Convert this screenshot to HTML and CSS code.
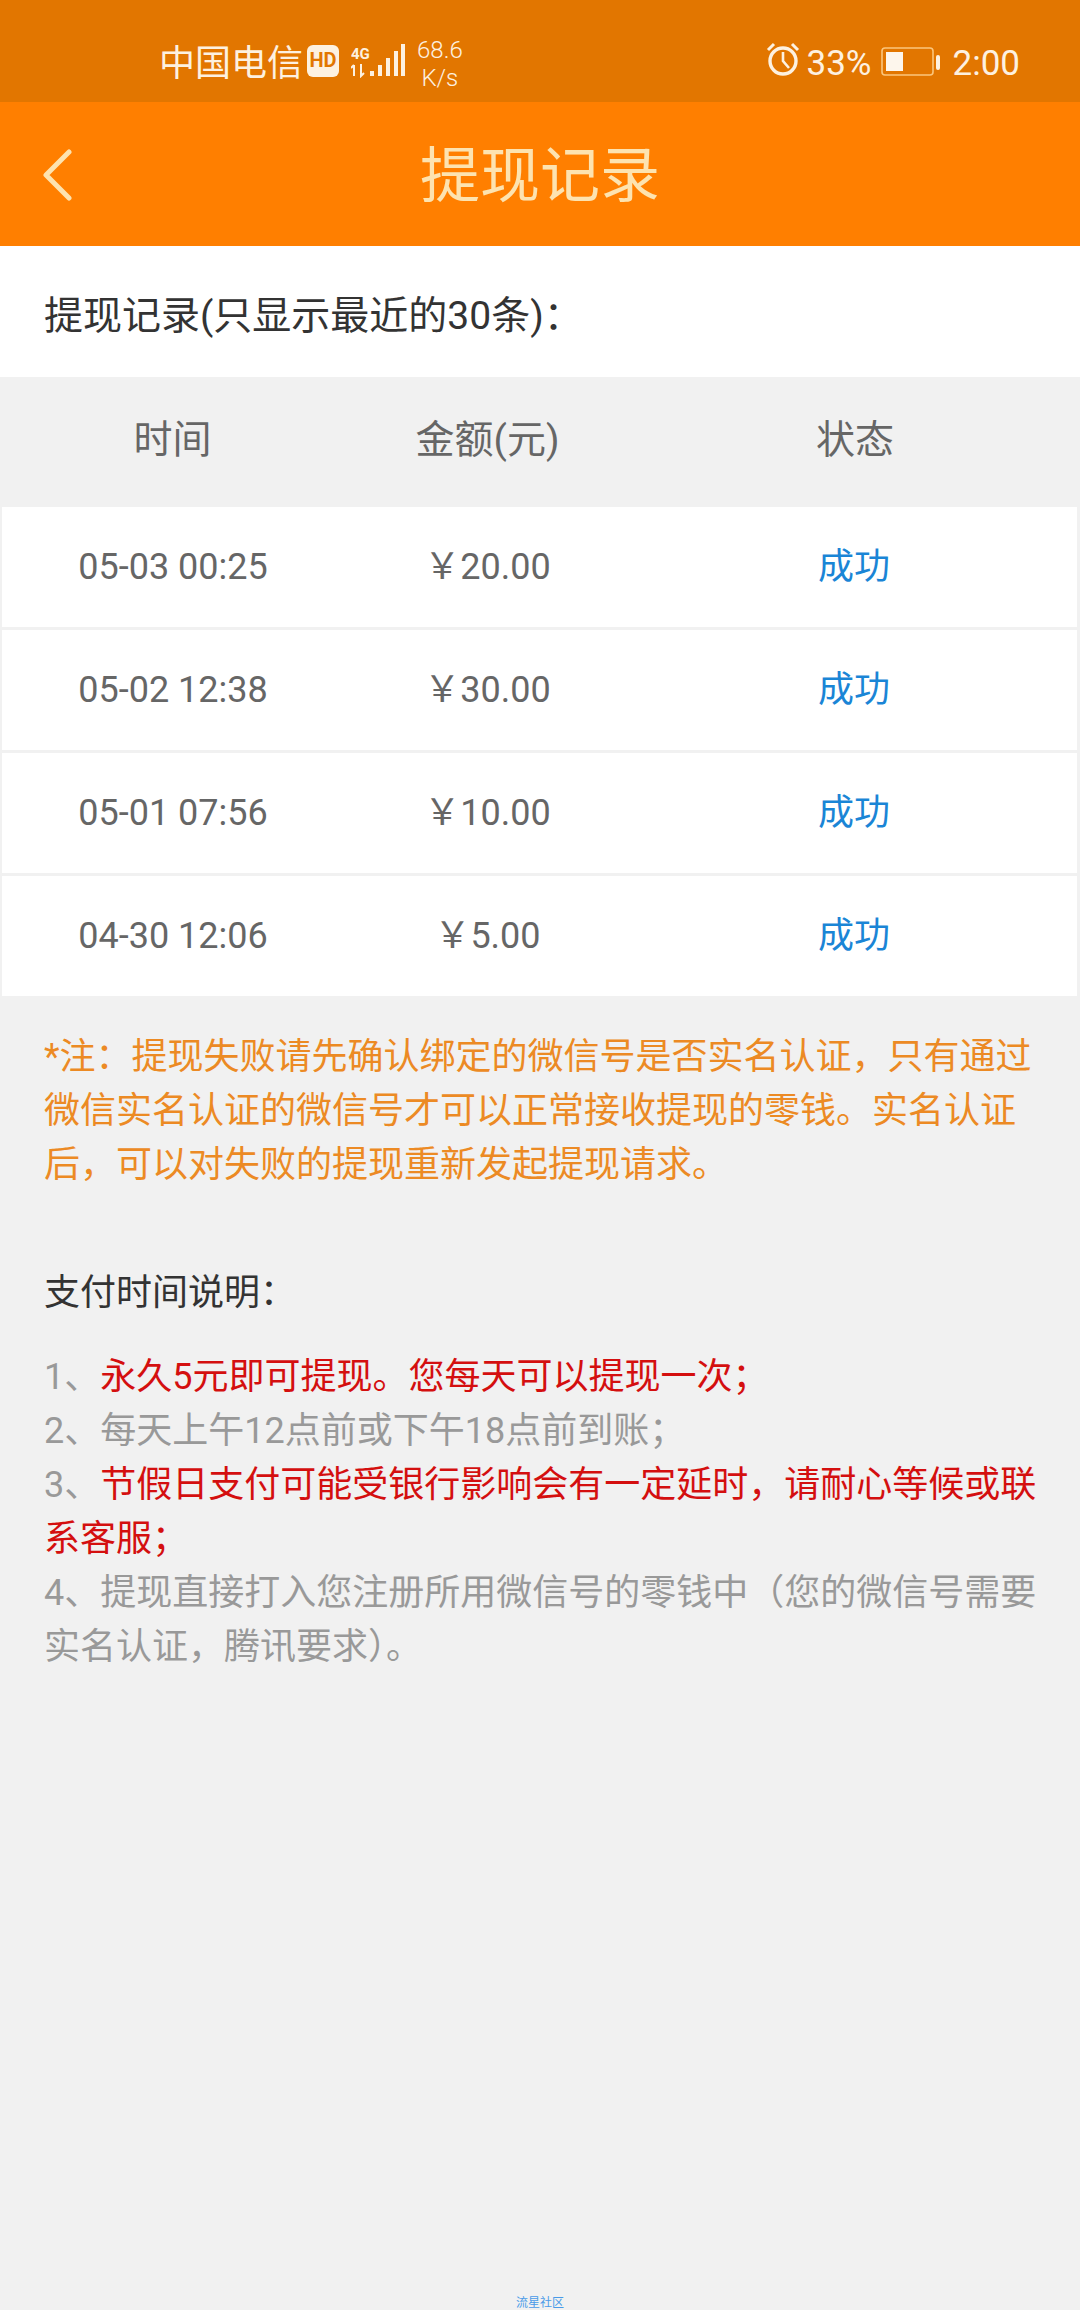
FILE: index.html
```html
<!DOCTYPE html>
<html lang="zh-CN">
<head>
    <meta charset="UTF-8">
    <meta name="viewport" content="width=device-width, initial-scale=1.0">
    <title>提现记录</title>
    <link rel="stylesheet" href="styles.css">
</head>
<body>
    <div class="status-bar">
        <div class="status-left">
            <span class="carrier">中国电信</span>
            <svg class="hd-icon" width="32" height="32" viewBox="0 0 32 32">
                <rect x="0" y="0" width="32" height="32" rx="6" fill="#fdf1e0"/>
                <text x="16" y="22" text-anchor="middle" class="hd-text">HD</text>
            </svg>
            <svg class="signal-icon" width="54" height="34" viewBox="0 0 54 34">
                <text x="0" y="15" class="net-text">4G</text>
                <path d="M3 32V21M0 24l3-3M10 20v12l3-3" stroke="#fdf1e0" stroke-width="2" fill="none"/>
                <rect x="19" y="27" width="4" height="5" fill="#fdf1e0"/>
                <rect x="27" y="21" width="4" height="11" fill="#fdf1e0"/>
                <rect x="35" y="14" width="4" height="18" fill="#fdf1e0"/>
                <rect x="43" y="7" width="4" height="25" fill="#fdf1e0"/>
                <rect x="50" y="0" width="4" height="32" fill="#fdf1e0"/>
            </svg>
            <div class="speed">68.6<br>K/s</div>
        </div>
        <div class="status-right">
            <svg class="alarm-icon" width="34" height="36" viewBox="0 0 34 36">
                <circle cx="17" cy="20" r="13" fill="none" stroke="#fdf1e0" stroke-width="3.4"/>
                <path d="M17 11v9l6 7" fill="none" stroke="#fdf1e0" stroke-width="2.6"/>
                <path d="M2 9l6-6M32 9l-6-6" stroke="#fdf1e0" stroke-width="3"/>
            </svg>
            <span class="battery-pct">33%</span>
            <svg class="battery-icon" width="60" height="30" viewBox="0 0 60 30">
                <rect x="1" y="1" width="51" height="27" rx="3" fill="none" stroke="#fbc67c" stroke-width="1.6"/>
                <rect x="5" y="5" width="17" height="19" fill="#fdf6ec"/>
                <rect x="55" y="8" width="4" height="15" rx="2" fill="#fdf1e0"/>
            </svg>
            <span class="clock">2:00</span>
        </div>
    </div>

    <div class="nav-bar">
        <svg class="back-icon" width="32" height="52" viewBox="0 0 32 52">
            <path d="M28 3L5 26l23 23" fill="none" stroke="#fde3b0" stroke-width="5" stroke-linecap="round" stroke-linejoin="round"/>
        </svg>
        <h1>提现记录</h1>
    </div>

    <div class="section-title">提现记录(只显示最近的30条)：</div>

    <div class="table-head">
        <div class="col-time">时间</div>
        <div class="col-money">金额(元)</div>
        <div class="col-state">状态</div>
    </div>
    <div class="table-body">
        <div class="row">
            <div class="col-time">05-03 00:25</div>
            <div class="col-money">￥20.00</div>
            <div class="col-state ok">成功</div>
        </div>
        <div class="row">
            <div class="col-time">05-02 12:38</div>
            <div class="col-money">￥30.00</div>
            <div class="col-state ok">成功</div>
        </div>
        <div class="row">
            <div class="col-time">05-01 07:56</div>
            <div class="col-money">￥10.00</div>
            <div class="col-state ok">成功</div>
        </div>
        <div class="row">
            <div class="col-time">04-30 12:06</div>
            <div class="col-money">￥5.00</div>
            <div class="col-state ok">成功</div>
        </div>
    </div>

    <p class="note">*注：提现失败请先确认绑定的微信号是否实名认证，只有通过微信实名认证的微信号才可以正常接收提现的零钱。实名认证后，可以对失败的提现重新发起提现请求。</p>

    <div class="pay-title">支付时间说明：</div>
    <ul class="pay-list">
        <li>1、<span class="red">永久5元即可提现。您每天可以提现一次；</span></li>
        <li>2、每天上午12点前或下午18点前到账；</li>
        <li>3、<span class="red">节假日支付可能受银行影响会有一定延时，请耐心等候或联系客服；</span></li>
        <li>4、提现直接打入您注册所用微信号的零钱中（您的微信号需要实名认证，腾讯要求）。</li>
    </ul>

    <div class="watermark">流星社区</div>
</body>
</html>
```

FILE: styles.css
```css
* {
    box-sizing: border-box;
}
html, body {
    margin: 0;
    padding: 0;
}
body {
    position: relative;
    width: 1080px;
    height: 2310px;
    overflow: hidden;
    background-color: #f1f1f1;
    font-family: "Roboto", "Noto Sans CJK SC", sans-serif;
    color: #333;
}
.status-bar {
    height: 102px;
    background-color: #e27600;
    color: #fdf1e0;
    display: flex;
    justify-content: space-between;
    align-items: center;
    padding: 26px 60px 0 159px;
}
.status-left, .status-right {
    display: flex;
    align-items: center;
    line-height: 40px;
}
.carrier {
    font-size: 36px;
}
.hd-icon {
    margin-left: 4px;
    margin-top: -6px;
}
.hd-text {
    font: bold 20px "Roboto", sans-serif;
    fill: #e27600;
}
.net-text {
    font: bold 15px "Roboto", sans-serif;
    fill: #fdf1e0;
}
.signal-icon {
    margin-left: 12px;
    margin-top: -6px;
}
.speed {
    margin-left: 12px;
    font-size: 24px;
    line-height: 28px;
    text-align: center;
    font-weight: 300;
}
.alarm-icon {
    margin-top: -10px;
}
.battery-pct {
    font-size: 35px;
    margin-left: 7px;
}
.battery-icon {
    margin-left: 9px;
    margin-top: -4px;
}
.clock {
    font-size: 35px;
    margin-left: 12px;
}
.nav-bar {
    position: relative;
    height: 144px;
    background-color: #ff7f00;
    display: flex;
    align-items: center;
    justify-content: center;
    padding-top: 5px;
}
.nav-bar h1 {
    margin: 0;
    font-size: 60px;
    font-weight: 400;
    line-height: 70px;
    color: #fde3b0;
}
.back-icon {
    position: absolute;
    left: 41px;
    top: 47px;
}
.section-title {
    height: 131px;
    background-color: #fff;
    padding: 8px 44px 0;
    display: flex;
    align-items: center;
    font-size: 39px;
    line-height: 50px;
    color: #333;
}
.table-head, .row {
    display: flex;
    align-items: center;
    line-height: 50px;
    color: #666;
    text-align: center;
}
.table-head {
    height: 130px;
    padding-bottom: 4px;
    font-size: 39px;
}
.table-body {
    padding: 0 3px 0 2px;
}
.row {
    height: 120px;
    margin-bottom: 3px;
    background-color: #fff;
    font-size: 36px;
}
.col-time {
    width: 345px;
}
.col-money {
    width: 285px;
}
.col-state {
    width: 450px;
}
.table-body .col-time {
    width: 342px;
}
.table-body .col-money {
    width: 287px;
}
.table-body .col-state {
    width: 446px;
}
.ok {
    color: #1a85d6;
}
.note {
    margin: 34px 0 0;
    padding: 0 40px 0 44px;
    font-size: 36px;
    line-height: 54px;
    color: #ec8a24;
}
.pay-title {
    margin-top: 74px;
    padding: 0 44px;
    font-size: 36px;
    line-height: 54px;
    color: #333;
}
.pay-list {
    list-style: none;
    margin: 30px 0 0;
    padding: 0 40px 0 44px;
    font-size: 36px;
    line-height: 54px;
    color: #999;
}
.red {
    color: #d40f0f;
}
.watermark {
    position: absolute;
    left: 0;
    right: 0;
    top: 2296px;
    text-align: center;
    font-size: 12px;
    line-height: 14px;
    color: #4a9be8;
}
```
